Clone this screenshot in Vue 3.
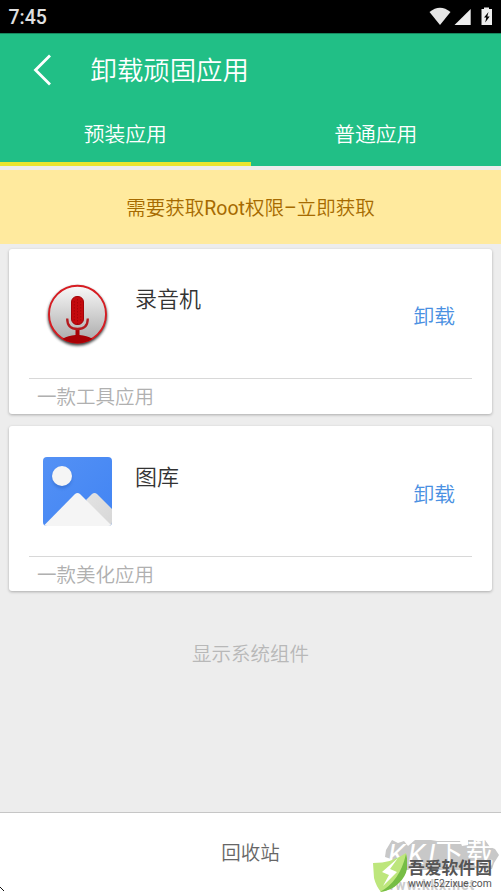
<script setup>
const tabs = [
  { label: '预装应用', active: true },
  { label: '普通应用', active: false },
]
const apps = [
  { name: '录音机', desc: '一款工具应用', icon: 'recorder' },
  { name: '图库', desc: '一款美化应用', icon: 'gallery' },
]
</script>

<template>
  <div class="screen">
    <div class="status">
      <span class="clock">7:45</span>
      <svg class="status-icons" width="66" height="20" viewBox="0 0 66 20">
        <path d="M.5 5Q11-3.500 21.500 5L11 18Z" fill="#e6e6e6" />
        <path d="M41.700 2V18H25.500Z" fill="#eee" />
        <path d="M52.500 2H55V.5H60V2H63V18H52.500Z" fill="#eee" />
        <path d="M59.500 5L55 10.500H57.300L56.200 15.500L60.700 9.500H58.300Z" fill="#000" />
      </svg>
    </div>

    <header class="header">
      <div class="titlebar">
        <svg class="back" width="20" height="34" viewBox="0 0 20 34">
          <path d="M17 2.500L2.500 17L17 31.500" fill="none" stroke="#fff" stroke-width="2.800" />
        </svg>
        <h1 class="title">卸载顽固应用</h1>
      </div>
      <nav class="tabs">
        <div v-for="t in tabs" :key="t.label" class="tab" :class="{ active: t.active }">{{ t.label }}</div>
      </nav>
    </header>

    <div class="banner">需要获取<span class="latin">Root</span>权限<span class="latin">–</span>立即获取</div>

    <main class="list">
      <section v-for="a in apps" :key="a.name" class="card" :class="a.icon">
        <div class="row">
          <svg v-if="a.icon === 'recorder'" class="icon" width="72" height="72" viewBox="0 0 72 72">
            <defs>
              <linearGradient id="disc" x1="0" y1="0" x2="0" y2="1">
                <stop offset="0" stop-color="#f8f8f8" />
                <stop offset="1" stop-color="#a9a9a9" />
              </linearGradient>
              <filter id="soft" x="-20%" y="-20%" width="140%" height="140%">
                <feGaussianBlur stdDeviation="1.500" />
              </filter>
              <clipPath id="discClip"><circle cx="36.500" cy="35.300" r="29" /></clipPath>
            </defs>
            <circle cx="36.500" cy="37" r="29.500" fill="#000" opacity=".8" filter="url(#soft)" />
            <circle cx="36.500" cy="35.300" r="28.500" fill="url(#disc)" stroke="#d71c22" stroke-width="1.900" />
            <g clip-path="url(#discClip)">
              <path d="M22 59.500Q27 56.500 34.500 56V49H38.500V56Q46 56.500 51 59.500V68H22Z" fill="#a80005" />
            </g>
            <path d="M26.200 39.500Q26.200 50 36.500 50Q46.800 50 46.800 39.500" fill="none" stroke="#b51a1e" stroke-width="2.300" />
            <rect x="30.500" y="17.500" width="12" height="28" rx="5.500" fill="#c40a0e" stroke="#a20408" stroke-width="1" />
            <path d="M33.300 22V42M36.500 20V45M39.700 22V42" stroke="#a80409" stroke-width="1" stroke-dasharray="1.500 1.500" />
          </svg>
          <svg v-else class="icon" width="72" height="72" viewBox="0 0 72 72">
            <defs>
              <linearGradient id="sky" x1="0" y1="0" x2="1" y2="1">
                <stop offset="0" stop-color="#5491f5" />
                <stop offset="1" stop-color="#4184f3" />
              </linearGradient>
              <linearGradient id="hill" x1="0" y1="0" x2="1" y2="1">
                <stop offset="0" stop-color="#e3e3e3" />
                <stop offset="1" stop-color="#d6d6d6" />
              </linearGradient>
              <filter id="glow" x="-30%" y="-30%" width="160%" height="160%">
                <feGaussianBlur stdDeviation="1.800" />
              </filter>
              <clipPath id="tile"><rect x="2" y="1" width="69" height="69" rx="4" /></clipPath>
            </defs>
            <g clip-path="url(#tile)">
              <rect width="72" height="72" fill="url(#sky)" />
              <circle cx="21" cy="22.500" r="10" fill="#2458b5" opacity=".4" filter="url(#glow)" />
              <circle cx="21" cy="20" r="10" fill="#f5f5f5" />
              <path d="M45 44L51 38Q53.500 36 56 38L74 56V72H60Z" fill="url(#hill)" />
              <path d="M2 70.500L34 38Q36.500 36 39 38L71.500 70.500Z" fill="#f5f5f5" />
            </g>
          </svg>
          <h2 class="name">{{ a.name }}</h2>
          <a class="action">卸载</a>
        </div>
        <p class="desc">{{ a.desc }}</p>
      </section>
      <div class="more">显示系统组件</div>
    </main>

    <footer class="footer">
      <span>回收站</span>
      <div class="mark">
        <div class="mark-back">
          <svg class="mark-blob" width="118" height="34" viewBox="0 0 118 34">
            <path d="M2 11L8 1L14 4L20 2L24 7L31 1H47L53 2H76L78 7L84 6V1H91L94 3L101 1L106 8L111 10L115 16L110 24L108 30L88 29L82 31H38L31 27L24 31H8L4 26L7 20L1 18Z" fill="#c8c8c8" />
          </svg>
          <span class="mark-word"><i>KK</i><i class="arrow">I</i>下载</span>
          <span class="mark-site">www.kkx.net</span>
        </div>
        <svg class="leaf" width="34" height="42" viewBox="0 0 34 42">
          <path d="M0 11Q19 11 33 1Q37 19 25 31Q18 38 8 40Q3 34 1 26Z" fill="#bde67c" />
          <path d="M7 40Q27 29 33 2Q38 20 26 31Q18 39 7 40Z" fill="#76bd45" />
          <path d="M25 6L9 20L16 23L10 34L24 20L17 17Z" fill="#fff" />
        </svg>
        <div class="mark-front">
          <b>吾爱软件园</b>
          <span>www.52zixue.com</span>
        </div>
      </div>
      <svg class="corner" width="5" height="5" viewBox="0 0 5 5">
        <path d="M0 0H1V1H2V2H1V1H0ZM2 2H3V3H4V4H3V3H2Z" fill="#111" />
      </svg>
    </footer>
  </div>
</template>

<style>
body { margin: 0; background: #ededed; }
</style>

<style scoped>
.screen {
  width: 501px;
  height: 892px;
  display: flex;
  flex-direction: column;
  overflow: hidden;
  background: #ededed;
  font-family: Roboto, "Noto Sans CJK SC", sans-serif;
  font-weight: 350;
}
h1, h2, p { margin: 0; font-weight: inherit; }
.status {
  height: 33px;
  flex: none;
  display: flex;
  align-items: center;
  justify-content: space-between;
  box-sizing: border-box;
  padding: 1px 8px 0 8.500px;
  background: #000;
  color: #e0e0e0;
}
.clock { padding-top: 2px; font-size: 19.500px; font-weight: 500; line-height: 32px; }
.status-icons { margin: 0 -2px 0 0; }
.header {
  height: 133px;
  flex: none;
  display: flex;
  flex-direction: column;
  background: #21bf86;
  color: #fff;
  box-shadow: inset 0 1px #17885f;
}
.titlebar { height: 72px; display: flex; align-items: center; padding: 1px 0 0 33px; }
.title { margin-left: 37.500px; padding-top: 2px; font-size: 26.400px; line-height: 40px; }
.tabs { flex: 1; display: flex; }
.tab {
  flex: 1;
  box-sizing: border-box;
  padding-top: 13px;
  font-size: 20.800px;
  line-height: 32px;
  text-align: center;
  border-bottom: 4px solid transparent;
}
.tab.active { border-bottom-color: #e9e52f; }
.banner {
  height: 74px;
  flex: none;
  margin-top: 4px;
  background: #ffea9e;
  color: #a66a00;
  font-size: 19.500px;
  line-height: 77px;
  text-align: center;
}
.latin { font-weight: 400; }
.list { flex: 1; display: flex; flex-direction: column; gap: 12px; padding: 5px 9px 0; }
.card {
  height: 165px;
  flex: none;
  box-sizing: border-box;
  padding: 0 20px;
  background: #fff;
  border-radius: 3px;
  box-shadow: 0 1px 3px rgba(0, 0, 0, .28);
}
.row {
  height: 130px;
  box-sizing: border-box;
  display: flex;
  align-items: flex-start;
  padding: 30px 16px 0 12px;
  border-bottom: 1px solid #d8d8d8;
}
.name { margin: 5px 0 0 22px; font-size: 22px; line-height: 32px; color: #333; }
.action { margin: 22px 1px 0 auto; font-size: 20.800px; line-height: 32px; color: #4a90e2; }
.desc { padding-left: 8px; font-size: 19.500px; line-height: 38px; color: #b0b0b0; }
.gallery .row { height: 131px; }
.gallery .name { margin-top: 6px; }
.gallery .action { margin-top: 23px; }
.more { margin-top: 34px; text-align: center; font-size: 19.500px; line-height: 36px; color: #b8b8b8; }
.footer {
  position: relative;
  height: 80px;
  flex: none;
  box-sizing: border-box;
  border-top: 1px solid #c6c6c6;
  background: #fff;
  text-align: center;
  font-size: 19.500px;
  line-height: 81px;
  color: #666;
}
.mark { position: absolute; left: 373px; top: 26px; width: 128px; height: 53px; line-height: 1; text-align: left; }
.mark-back { position: absolute; left: 11px; top: 0; }
.mark-blob { display: block; }
.mark-word {
  position: absolute;
  left: 4px;
  top: 1px;
  color: #fff;
  font-size: 28px;
  font-weight: 400;
  line-height: 30px;
  letter-spacing: 2px;
  white-space: nowrap;
}
.mark-word i { letter-spacing: 3px; }
.mark-word .arrow { letter-spacing: 0; }
.mark-site {
  position: absolute;
  left: 0;
  top: 39px;
  color: #ccc;
  font-size: 14px;
  font-weight: 700;
  letter-spacing: 1px;
}
.leaf { position: absolute; left: 0; top: 13px; }
.mark-front {
  position: absolute;
  left: 35px;
  top: 19px;
  display: flex;
  flex-direction: column;
  color: #555;
  white-space: nowrap;
}
.mark-front b { font-size: 16.800px; line-height: 20px; font-weight: 700; }
.mark-front span { font-size: 10.300px; line-height: 11px; font-weight: 400; }
.corner { position: absolute; left: 0; bottom: 0; }
</style>
